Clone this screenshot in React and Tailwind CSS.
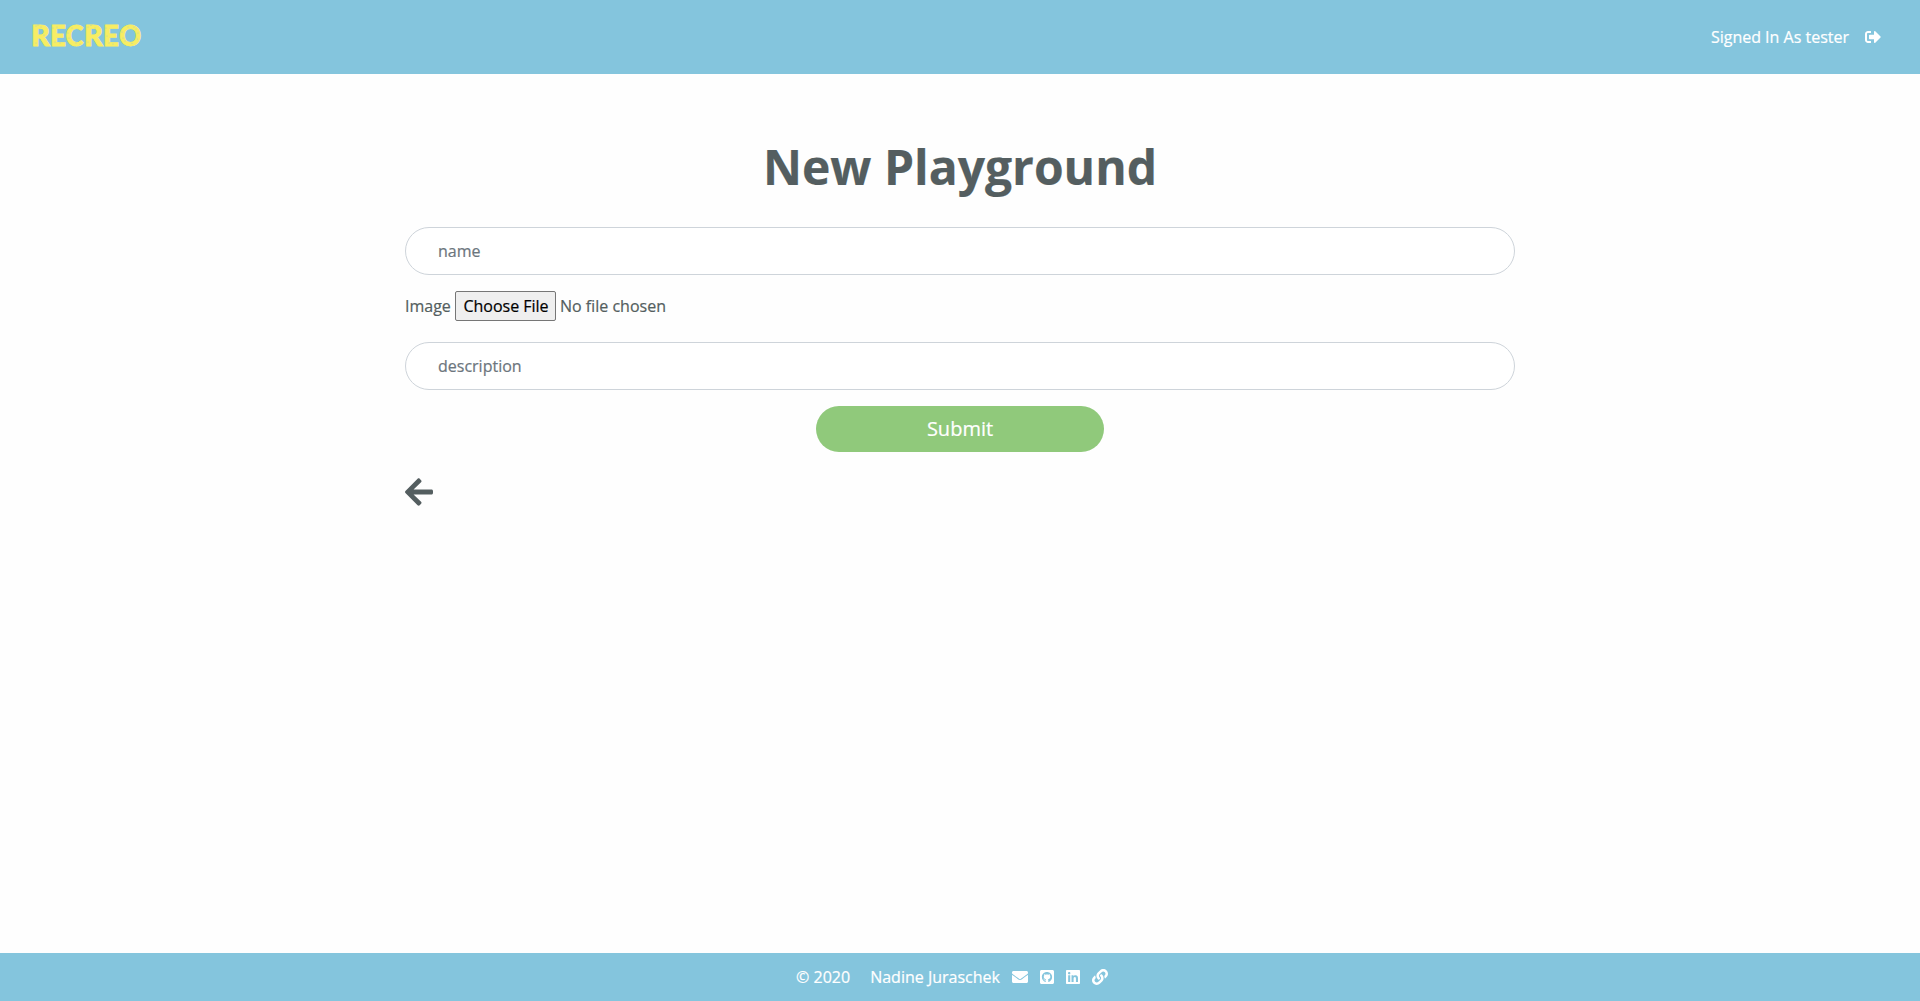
import { FaArrowLeft, FaEnvelope, FaGithubSquare, FaLink, FaLinkedin, FaSignOutAlt } from "react-icons/fa";

const letters = [
  ["R", 31.2, 18.6], ["E", 50.2, 15.6], ["C", 65.8, 17.6], ["R", 84.2, 18.6], ["E", 103.2, 15.6], ["O", 119.2, 22],
];

const specks = [
  [36, 26], [38, 25], [41, 27], [36, 43], [44, 35], [53, 28], [55, 42], [60, 43], [57, 27], [68, 33], [69, 38],
  [72, 28], [76, 43], [80, 44], [88, 27], [91, 25.5], [95, 28], [88, 42], [106, 28], [109, 43], [113, 44], [107, 36],
  [122, 32], [123, 38], [125, 41], [128, 27], [132, 43.5], [136, 29], [138, 33], [137.5, 39], [134, 27],
];

function Logo() {
  return (
    <svg width="124" height="50" viewBox="25 12 124 50" role="img" aria-label="Recreo">
      <g fill="#f7ed63" stroke="#f7ed63" strokeWidth="0.9" fontFamily="Lato" fontWeight="900" fontSize="29">
        {letters.map(([c, x, w]) => (
          <text key={x} x={x} y="45.8" textLength={w} lengthAdjust="spacingAndGlyphs">{c}</text>
        ))}
      </g>
      {specks.map(([x, y]) => (
        <circle key={`${x}-${y}`} cx={x} cy={y} r="0.6" fill="#84c5dd" opacity="0.65" />
      ))}
    </svg>
  );
}

const field =
  "block h-12 w-full rounded-[25px] border border-[#ced4da] bg-white px-8 text-base text-[#495057] placeholder:text-[#6c757d] placeholder:opacity-100";

export default function App() {
  return (
    <div className="flex min-h-screen flex-col bg-[#fefefe] font-['Open_Sans',sans-serif] text-base text-[#545e60] [-webkit-text-stroke:0.2px]">
      <nav className="flex h-[74px] items-center justify-between bg-[#84c5dd] pr-[39px] pl-[25px] text-white">
        <a href="#"><Logo /></a>
        <div className="flex items-center gap-4">
          <span>Signed In As tester</span>
          <FaSignOutAlt className="size-4" />
        </div>
      </nav>
      <main className="mx-auto w-[1110px] flex-1 pt-16">
        <h1 className="text-center text-[48px] leading-[58px] font-bold">New Playground</h1>
        <form className="mt-[31px]">
          <input className={field} placeholder="name" />
          <div className="mt-4 flex h-[30px] items-center">
            <label className="w-[50px]">Image</label>
            <button type="button" className="h-[30px] w-[101px] rounded-[2px] border border-[#767676] bg-[#efefef] pl-px text-black">Choose File</button>
            <span className="ml-1">No file chosen</span>
          </div>
          <input className={`${field} mt-[21px]`} placeholder="description" />
          <button type="button" className="mx-auto mt-4 block h-[46px] w-72 rounded-[25px] bg-[#90c97b] text-xl text-white">Submit</button>
        </form>
        <a href="#" className="mt-6 block w-7"><FaArrowLeft className="h-8 w-7" /></a>
      </main>
      <footer className="flex h-12 items-center justify-center bg-[#84c5dd] pr-4 text-white">
        <span className="mr-5">© 2020</span>
        <span className="mr-3">Nadine Juraschek</span>
        <FaEnvelope className="mr-3 size-4" />
        <FaGithubSquare className="mr-3 h-4 w-3.5" />
        <FaLinkedin className="mr-3 h-4 w-3.5" />
        <FaLink className="size-4" />
      </footer>
    </div>
  );
}
